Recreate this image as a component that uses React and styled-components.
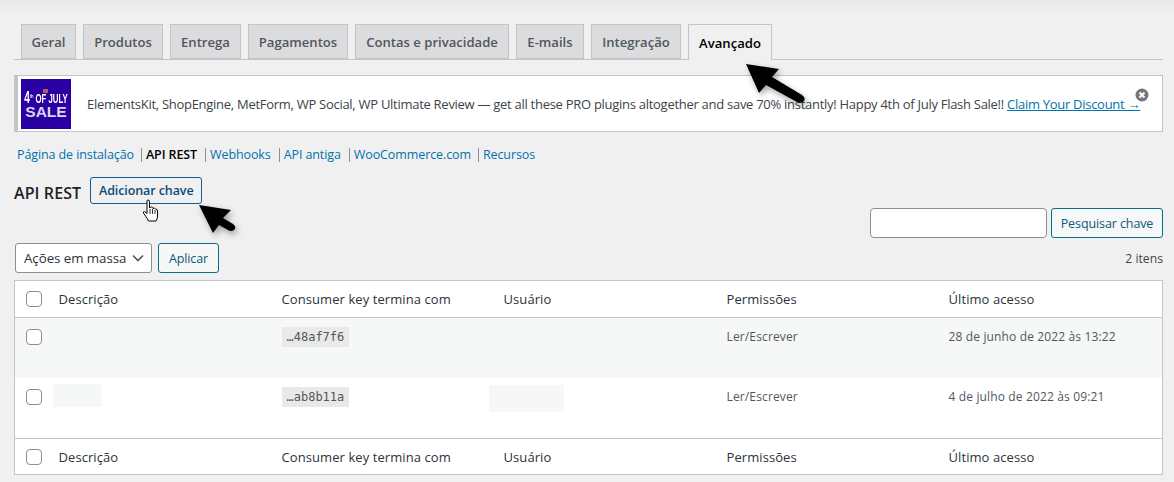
import React from "react";
import styled, { createGlobalStyle } from "styled-components";

const GlobalStyle = createGlobalStyle`
  html, body {
    margin: 0;
    padding: 0;
    background: #f0f0f1;
  }
  body {
    font-family: "Open Sans", "Noto Sans", sans-serif;
    font-size: 13px;
    color: #3c434a;
    overflow: hidden;
  }
`;

const Page = styled.div`
  position: relative;
  width: 1174px;
  height: 482px;
  box-sizing: border-box;
  padding: 24px 11px 0 14px;
  overflow: hidden;
  background: linear-gradient(#e8e8e9, #f0f0f1 12px);
`;

const Tabs = styled.nav`
  display: flex;
  gap: 7px;
  height: 35px;
  padding-left: 7px;
  border-bottom: 1px solid #c3c4c7;
`;

const Tab = styled.a`
  display: flex;
  align-items: center;
  justify-content: center;
  width: ${(p) => p.$w}px;
  box-sizing: border-box;
  border: 1px solid #c3c4c7;
  border-bottom: ${(p) => (p.$active ? "none" : "1px solid #c3c4c7")};
  background: ${(p) => (p.$active ? "#f0f0f1" : "#dcdcde")};
  color: ${(p) => (p.$active ? "#000" : "#50575e")};
  font-size: 13.1px;
  font-weight: 600;
  height: ${(p) => (p.$active ? "36px" : "35px")};
`;

const Notice = styled.div`
  position: relative;
  display: flex;
  align-items: center;
  gap: 16px;
  height: 57px;
  margin-top: 15px;
  box-sizing: border-box;
  padding-left: 3px;
  background: #fff;
  border: 1px solid #c3c4c7;
  border-left: 4px solid #c3c4c7;
  font-size: 13px;
  letter-spacing: -0.28px;
  white-space: nowrap;
`;

const Banner = styled.div`
  position: relative;
  flex: none;
  width: 50px;
  height: 50px;
  background: #2a00a3;
  color: #fff;
  font-family: "Liberation Sans", sans-serif;
  font-weight: 700;
  text-align: center;
  letter-spacing: 0;
  overflow: hidden;
`;

const BannerTop = styled.div`
  margin: 11px 0 0 -15px;
  width: 80px;
  height: 15px;
  font-size: 13px;
  line-height: 15px;
  white-space: nowrap;
  transform: scaleX(0.6);
`;

const BannerFour = styled.span`
  font-size: 17px;
`;

const BannerTh = styled.sup`
  font-size: 6px;
  line-height: 0;
`;

const BannerSale = styled.div`
  font-size: 15.5px;
  line-height: 14px;
  color: #dcd6f5;
`;

const Flag = styled.span`
  position: absolute;
  top: 10px;
  left: 22px;
  width: 5px;
  height: 4px;
  background: #b35a78;
`;

const NoticeLink = styled.a`
  color: #0073aa;
  text-decoration: underline;
`;

const Dismiss = styled.svg`
  position: absolute;
  top: 12px;
  right: 13px;
`;

const SubNav = styled.ul`
  display: flex;
  align-items: center;
  height: 18px;
  margin: 14px 0 0 3px;
  padding: 0;
  list-style: none;
  font-size: 12.5px;
  letter-spacing: -0.1px;
`;

const SubItem = styled.li`
  color: ${(p) => (p.$current ? "#000" : "#0073aa")};
  font-weight: ${(p) => (p.$current ? 600 : 400)};
  margin-left: ${(p) => p.$gap || 0}px;
  padding-left: ${(p) => (p.$first ? 0 : 4)}px;
  border-left: ${(p) => (p.$first ? "none" : "1px solid #8c8f94")};
  line-height: 14px;
`;

const HeadingRow = styled.div`
  display: flex;
  align-items: center;
  gap: 9px;
  height: 27px;
  margin-top: 13px;
`;

const Heading = styled.h2`
  margin: 4px 0 0;
  font-size: 16px;
  font-weight: 600;
  letter-spacing: 0.1px;
  color: #1d2327;
`;

const Button = styled.button`
  box-sizing: border-box;
  width: ${(p) => p.$w}px;
  height: ${(p) => p.$h || 30}px;
  padding: 0;
  border: 1px solid ${(p) => p.$line || "#2271b1"};
  border-radius: 3px;
  background: ${(p) => p.$bg || "#f6f7f7"};
  color: ${(p) => p.$color || "#135e96"};
  font-family: inherit;
  font-size: 12.5px;
  font-weight: ${(p) => p.$weight || 400};
  letter-spacing: -0.1px;
`;

const SearchRow = styled.div`
  display: flex;
  justify-content: flex-end;
  gap: 4px;
  margin-top: 4px;
`;

const SearchInput = styled.input`
  box-sizing: border-box;
  width: 177px;
  height: 30px;
  border: 1px solid #8c8f94;
  border-radius: 4px;
  background: #fff;
`;

const ActionsRow = styled.div`
  display: flex;
  align-items: center;
  gap: 6px;
  height: 30px;
  margin: 5px 0 7px 1px;
`;

const BulkSelect = styled.div`
  display: flex;
  align-items: center;
  justify-content: space-between;
  box-sizing: border-box;
  width: 137px;
  height: 30px;
  padding: 0 7px 0 8px;
  border: 1px solid #8c8f94;
  border-radius: 3px;
  background: #fff;
  color: #2c3338;
  font-size: 13.3px;
  letter-spacing: -0.05px;
`;

const Count = styled.span`
  margin-left: auto;
  font-size: 12.2px;
  color: #3c434a;
`;

const Table = styled.table`
  width: 100%;
  height: 195px;
  table-layout: fixed;
  border-collapse: collapse;
  background: #fff;
  border: 1px solid #c3c4c7;
`;

const HeadCell = styled.th`
  height: ${(p) => p.$h || 37}px;
  padding: 0;
  box-sizing: border-box;
  font-size: 13px;
  font-weight: 400;
  text-align: left;
  color: #2c3338;
  letter-spacing: 0.08px;
  border-bottom: ${(p) => (p.$foot ? "none" : "1px solid #c3c4c7")};
  border-top: ${(p) => (p.$foot ? "1px solid #c3c4c7" : "none")};
`;

const Row = styled.tr`
  background: ${(p) => (p.$alt ? "#f6f7f7" : "#fff")};
`;

const Cell = styled.td`
  height: 60px;
  padding: 9px 0 0;
  box-sizing: border-box;
  vertical-align: top;
  font-size: 12px;
  line-height: 20px;
  letter-spacing: 0.14px;
  color: #50575e;
`;

const Check = styled.span`
  display: block;
  box-sizing: border-box;
  width: 16px;
  height: 16px;
  margin-left: 11px;
  margin-top: ${(p) => p.$top || 0}px;
  border: 1px solid #8c8f94;
  border-radius: 4px;
  background: #fff;
`;

const Code = styled.code`
  display: inline-block;
  padding: 0 5px;
  height: 20px;
  margin-top: -1px;
  background: #e9e9ea;
  font-family: "DejaVu Sans Mono", "Liberation Mono", monospace;
  font-size: 12px;
  line-height: 20px;
  letter-spacing: 0;
  color: #50575e;
`;

const Blank = styled.div`
  width: ${(p) => p.$w}px;
  height: ${(p) => p.$h}px;
  margin-left: ${(p) => p.$x}px;
  margin-top: ${(p) => p.$y}px;
  background: #f6f7f7;
`;

const Overlay = styled.svg`
  position: absolute;
  left: ${(p) => p.$x}px;
  top: ${(p) => p.$y}px;
  overflow: visible;
`;

const Shadowed = styled.g`
  filter: drop-shadow(2px 3px 3px rgba(0, 0, 0, 0.35));
`;

const tabs = [
  ["Geral", 55],
  ["Produtos", 80],
  ["Entrega", 71],
  ["Pagamentos", 100],
  ["Contas e privacidade", 154],
  ["E-mails", 68],
  ["Integração", 90],
];

const cols = ["Descrição", "Consumer key termina com", "Usuário", "Permissões", "Último acesso"];

const longArrow = "M0 0 L33 5 L26 13 L56 31 Q60 34 58 37 Q55 40 51 38 L20 21 L13 29 Z";
const shortArrow = "M0 0 L32 5 L24 13 L34 19 Q38 22 35 25 Q32 27 29 25 L20 20 L14 28 Z";

function HeaderCells({ foot }) {
  return (
    <>
      <HeadCell $foot={foot} $h={foot ? 36 : 37}><Check /></HeadCell>
      {cols.map((c) => (
        <HeadCell key={c} $foot={foot} $h={foot ? 36 : 37}>{c}</HeadCell>
      ))}
    </>
  );
}

function Arrow({ x, y, d }) {
  return (
    <Overlay $x={x} $y={y} width="60" height="40" viewBox="0 0 60 40">
      <Shadowed>
        <path d={d} fill="#000" />
      </Shadowed>
    </Overlay>
  );
}

export default function App() {
  return (
    <Page>
      <GlobalStyle />
      <Tabs>
        {tabs.map(([t, w]) => (
          <Tab key={t} $w={w}>{t}</Tab>
        ))}
        <Tab $w={84} $active>Avançado</Tab>
      </Tabs>

      <Notice>
        <Banner>
          <Flag />
          <BannerTop><BannerFour>4</BannerFour><BannerTh>th</BannerTh> OF JULY</BannerTop>
          <BannerSale>SALE</BannerSale>
        </Banner>
        <span>
          ElementsKit, ShopEngine, MetForm, WP Social, WP Ultimate Review — get all these PRO plugins altogether and save 70% instantly! Happy 4th of July Flash Sale!!{" "}
          <NoticeLink>Claim Your Discount →</NoticeLink>
        </span>
        <Dismiss width="14" height="14" viewBox="0 0 14 14">
          <circle cx="7" cy="7" r="6.5" fill="#72777c" />
          <path d="M4.5 4.5 L9.5 9.5 M9.5 4.5 L4.5 9.5" stroke="#fff" strokeWidth="2" />
        </Dismiss>
      </Notice>

      <SubNav>
        <SubItem $first>Página de instalação</SubItem>
        <SubItem $current $gap={7}>API REST</SubItem>
        <SubItem $gap={8}>Webhooks</SubItem>
        <SubItem $gap={8}>API antiga</SubItem>
        <SubItem $gap={8}>WooCommerce.com</SubItem>
        <SubItem $gap={7}>Recursos</SubItem>
      </SubNav>

      <HeadingRow>
        <Heading>API REST</Heading>
        <Button $w={112} $h={27} $line="#135e96" $bg="#f0f0f1" $color="#0a4b78" $weight={600}>Adicionar chave</Button>
      </HeadingRow>

      <SearchRow>
        <SearchInput />
        <Button $w={112} $line="#0a6e8a" $color="#0a5a78">Pesquisar chave</Button>
      </SearchRow>

      <ActionsRow>
        <BulkSelect>
          Ações em massa
          <svg width="12" height="8" viewBox="0 0 12 8">
            <path d="M1 1.5 L6 6.5 L11 1.5" fill="none" stroke="#50575e" strokeWidth="1.6" />
          </svg>
        </BulkSelect>
        <Button $w={61} $line="#0a6e8a" $color="#0a5a78">Aplicar</Button>
        <Count>2 itens</Count>
      </ActionsRow>

      <Table>
        <colgroup>
          <col style={{ width: 44 }} />
          <col style={{ width: 223 }} />
          <col style={{ width: 222 }} />
          <col style={{ width: 223 }} />
          <col style={{ width: 222 }} />
          <col />
        </colgroup>
        <thead>
          <tr><HeaderCells /></tr>
        </thead>
        <tbody>
          <Row $alt>
            <Cell><Check $top={2} /></Cell>
            <Cell />
            <Cell><Code>…48af7f6</Code></Cell>
            <Cell />
            <Cell>Ler/Escrever</Cell>
            <Cell>28 de junho de 2022 às 13:22</Cell>
          </Row>
          <Row>
            <Cell><Check $top={2} /></Cell>
            <Cell><Blank $w={49} $h={23} $x={-6} $y={-3} /></Cell>
            <Cell><Code>…ab8b11a</Code></Cell>
            <Cell><Blank $w={75} $h={27} $x={-15} $y={-2} /></Cell>
            <Cell>Ler/Escrever</Cell>
            <Cell>4 de julho de 2022 às 09:21</Cell>
          </Row>
        </tbody>
        <tfoot>
          <tr><HeaderCells foot /></tr>
        </tfoot>
      </Table>

      <Arrow x={746} y={64} d={longArrow} />
      <Arrow x={199} y={205} d={shortArrow} />
      <Overlay $x={142} $y={199} width="18" height="24" viewBox="0 0 18 24">
        <path
          d="M5 2 Q5 1 6 1 Q7.5 1 7.5 2.5 V9 Q8 8 9.5 8 Q11 8 11 9.5 Q12.5 8.5 13.5 10 Q15.5 10 15.5 12 V17 Q15.5 20 14 22 H6.5 Q5.5 19.5 3.5 17 L1.5 14 Q1 12.5 2.5 12.5 L5 14.5 Z"
          fill="#fff"
          stroke="#000"
          strokeWidth="1"
        />
        <path d="M8 10 V15 M10.5 10 V15 M13 11 V15" stroke="#000" strokeWidth="0.8" fill="none" />
      </Overlay>
    </Page>
  );
}
